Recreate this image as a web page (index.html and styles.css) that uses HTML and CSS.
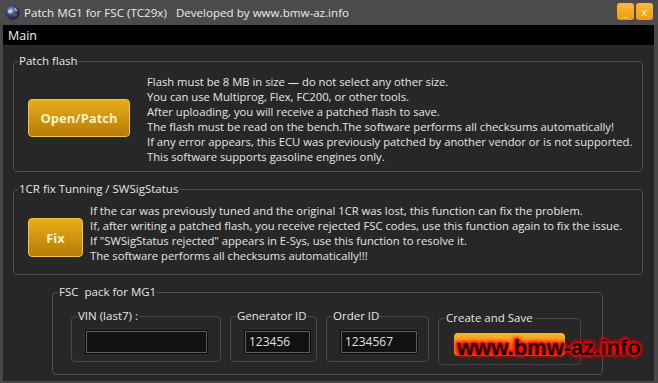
FILE: index.html
```html
<!DOCTYPE html>
<html lang="en">
<head>
    <meta charset="UTF-8">
    <meta name="viewport" content="width=device-width, initial-scale=1.0">
    <title>Patch MG1 for FSC (TC29x)</title>
    <link rel="stylesheet" href="styles.css">
</head>
<body>
    <div class="window">
        <div class="titlebar">
            <svg class="app-icon" viewBox="0 0 16 16">
                <defs>
                    <radialGradient id="globe" cx="0.4" cy="0.35" r="0.7">
                        <stop offset="0" stop-color="#9fb8d8"/>
                        <stop offset="0.5" stop-color="#2c4a78"/>
                        <stop offset="1" stop-color="#0d1a33"/>
                    </radialGradient>
                </defs>
                <circle cx="8" cy="8" r="7.5" fill="url(#globe)"/>
                <path d="M3 6 Q6 4 8 6 Q7 9 4 9 Z" fill="#d8dde6" opacity="0.8"/>
                <path d="M9 9 Q12 8 13 11 Q11 13 9 12 Z" fill="#c62828"/>
                <path d="M10 3 Q13 4 13 7 L11 6 Z" fill="#e6e9ef" opacity="0.7"/>
            </svg>
            <span class="title">Patch MG1 for FSC (TC29x)   Developed by www.bmw-az.info</span>
            <div class="win-buttons">
                <span class="win-btn">_</span>
                <span class="win-btn">x</span>
            </div>
        </div>
        <div class="frame">
            <div class="menubar"><span>Main</span></div>
            <div class="content">
                <fieldset class="group group-patch">
                    <legend>Patch flash</legend>
                    <div class="group-body patch-body">
                        <button class="gold-btn btn-open">Open/Patch</button>
                        <div class="info">
                            <p>Flash must be 8 MB in size — do not select any other size.</p>
                            <p>You can use Multiprog, Flex, FC200, or other tools.</p>
                            <p>After uploading, you will receive a patched flash to save.</p>
                            <p>The flash must be read on the bench.The software performs all checksums automatically!</p>
                            <p>If any error appears, this ECU was previously patched by another vendor or is not supported.</p>
                            <p>This software supports gasoline engines only.</p>
                        </div>
                    </div>
                </fieldset>

                <fieldset class="group group-fix">
                    <legend>1CR fix Tunning / SWSigStatus</legend>
                    <div class="group-body fix-body">
                        <button class="gold-btn btn-fix">Fix</button>
                        <div class="info">
                            <p>If the car was previously tuned and the original 1CR was lost, this function can fix the problem.</p>
                            <p>If, after writing a patched flash, you receive rejected FSC codes, use this function again to fix the issue.</p>
                            <p>If "SWSigStatus rejected" appears in E-Sys, use this function to resolve it.</p>
                            <p>The software performs all checksums automatically!!!</p>
                        </div>
                    </div>
                </fieldset>

                <fieldset class="group group-fsc">
                    <legend class="pre">FSC  pack for MG1</legend>
                    <div class="group-body fsc-body">
                        <fieldset class="sub sub-vin">
                            <legend>VIN (last7) :</legend>
                            <div class="sub-body"><div class="field field-vin"></div></div>
                        </fieldset>
                        <fieldset class="sub sub-gen">
                            <legend>Generator ID</legend>
                            <div class="sub-body"><div class="field field-gen">123456</div></div>
                        </fieldset>
                        <fieldset class="sub sub-order">
                            <legend>Order ID</legend>
                            <div class="sub-body"><div class="field field-order">1234567</div></div>
                        </fieldset>
                        <fieldset class="sub sub-create">
                            <legend>Create and Save</legend>
                            <div class="sub-body create-body"><div class="save-btn"></div></div>
                        </fieldset>
                    </div>
                </fieldset>
            </div>
        </div>
        <div class="watermark">www.bmw-az.info</div>
    </div>
</body>
</html>
```

FILE: styles.css
```css
* {
    box-sizing: border-box;
}
body {
    margin: 0;
    background: #474747;
    font-family: "Open Sans", "Noto Sans", sans-serif;
    font-size: 11.25px;
    color: #e6e6e6;
}
.window {
    position: relative;
    width: 658px;
    height: 383px;
    display: flex;
    flex-direction: column;
    background: #474747;
    overflow: hidden;
}
.titlebar {
    height: 25px;
    display: flex;
    align-items: center;
    padding: 0 5px;
    background: #4b4b4b;
}
.app-icon {
    width: 15px;
    height: 15px;
    margin-right: 4px;
}
.title {
    white-space: pre;
    font-size: 11.6px;
    color: #ececec;
}
.win-buttons {
    margin-left: auto;
    display: flex;
    gap: 2px;
    margin-top: -2px;
}
.win-btn {
    width: 17px;
    height: 17px;
    border-radius: 3px;
    background: linear-gradient(#fbb83e, #ef9c10);
    color: #fff1c8;
    font-size: 11px;
    line-height: 1;
    display: flex;
    align-items: center;
    justify-content: center;
}
.frame {
    flex: 1;
    display: flex;
    flex-direction: column;
    padding: 0 4px 2px 3px;
}
.menubar {
    height: 20px;
    display: flex;
    align-items: center;
    padding-left: 5px;
    background: #000;
    font-size: 12.5px;
    color: #f2f2f2;
}
.content {
    flex: 1;
    background: #272727;
    padding-top: 8px;
}
fieldset {
    margin: 0;
    padding: 0;
    min-width: 0;
    border: 1px solid #505050;
    border-radius: 4px;
}
legend {
    margin-left: 4px;
    padding: 0 1px;
    line-height: 16px;
    font-size: 11.5px;
    color: #e6e6e6;
}
.pre {
    white-space: pre;
}
.group-body {
    display: flex;
    align-items: flex-start;
}
.group-patch {
    margin: 0 11px 0 10px;
}
.patch-body {
    padding: 5px 14px 7px;
}
.group-fix {
    margin: 9px 11px 0 10px;
}
.fix-body {
    padding: 6px 14px 11px;
}
.info p {
    margin: 0;
    line-height: 15px;
    white-space: nowrap;
}
.gold-btn {
    flex: none;
    padding: 0;
    border: 1px solid #f2c552;
    border-radius: 4px;
    background: linear-gradient(#e9ab18, #b67d06);
    color: #fdf0c8;
    font-family: "Open Sans", "Noto Sans", sans-serif;
    font-size: 13px;
    font-weight: bold;
    cursor: pointer;
}
.btn-open {
    width: 102px;
    height: 38px;
    margin-top: 25px;
    margin-right: 17px;
}
.btn-fix {
    width: 55px;
    height: 39px;
    margin-top: 15px;
    margin-right: 7px;
}
.group-fsc {
    width: 551px;
    margin: 9px 0 0 49px;
}
.group-fsc legend {
    margin-left: 5px;
}
.fsc-body {
    gap: 9px;
    padding: 8px 18px 9px;
}
.sub {
    border-color: #484848;
}
.sub-vin {
    width: 150px;
}
.sub-gen {
    width: 87px;
}
.sub-order {
    width: 103px;
}
.sub-create {
    width: 143px;
    margin-top: 2px;
}
.group-fsc .sub-create legend {
    margin-left: 6px;
}
.sub-body {
    padding: 7px 14px 8px;
}
.create-body {
    padding-left: 15px;
}
.field {
    height: 22px;
    padding: 0 3px;
    background: #121212;
    border: 1px solid #5e5e5e;
    box-shadow: 0 0 0 1px #0a0a0a;
    color: #e0e0e0;
    font-size: 12px;
    line-height: 20px;
}
.field-vin {
    width: 121px;
}
.field-gen {
    width: 65px;
}
.field-order {
    width: 76px;
}
.save-btn {
    width: 111px;
    height: 23px;
    border-radius: 4px;
    background: linear-gradient(#f8b830, #e07c00);
}
.watermark {
    position: absolute;
    left: 457px;
    top: 335px;
    font-family: "Liberation Sans", Arial, sans-serif;
    font-size: 22px;
    font-weight: bold;
    color: #140000;
    text-shadow: 0 0 2px #ff0000, 0 0 3px #ff0000, 0 0 3px #ff0000, 0 0 4px #ff0000, 0 0 5px #ff0000, 0 0 6px #ff0000;
}
```
